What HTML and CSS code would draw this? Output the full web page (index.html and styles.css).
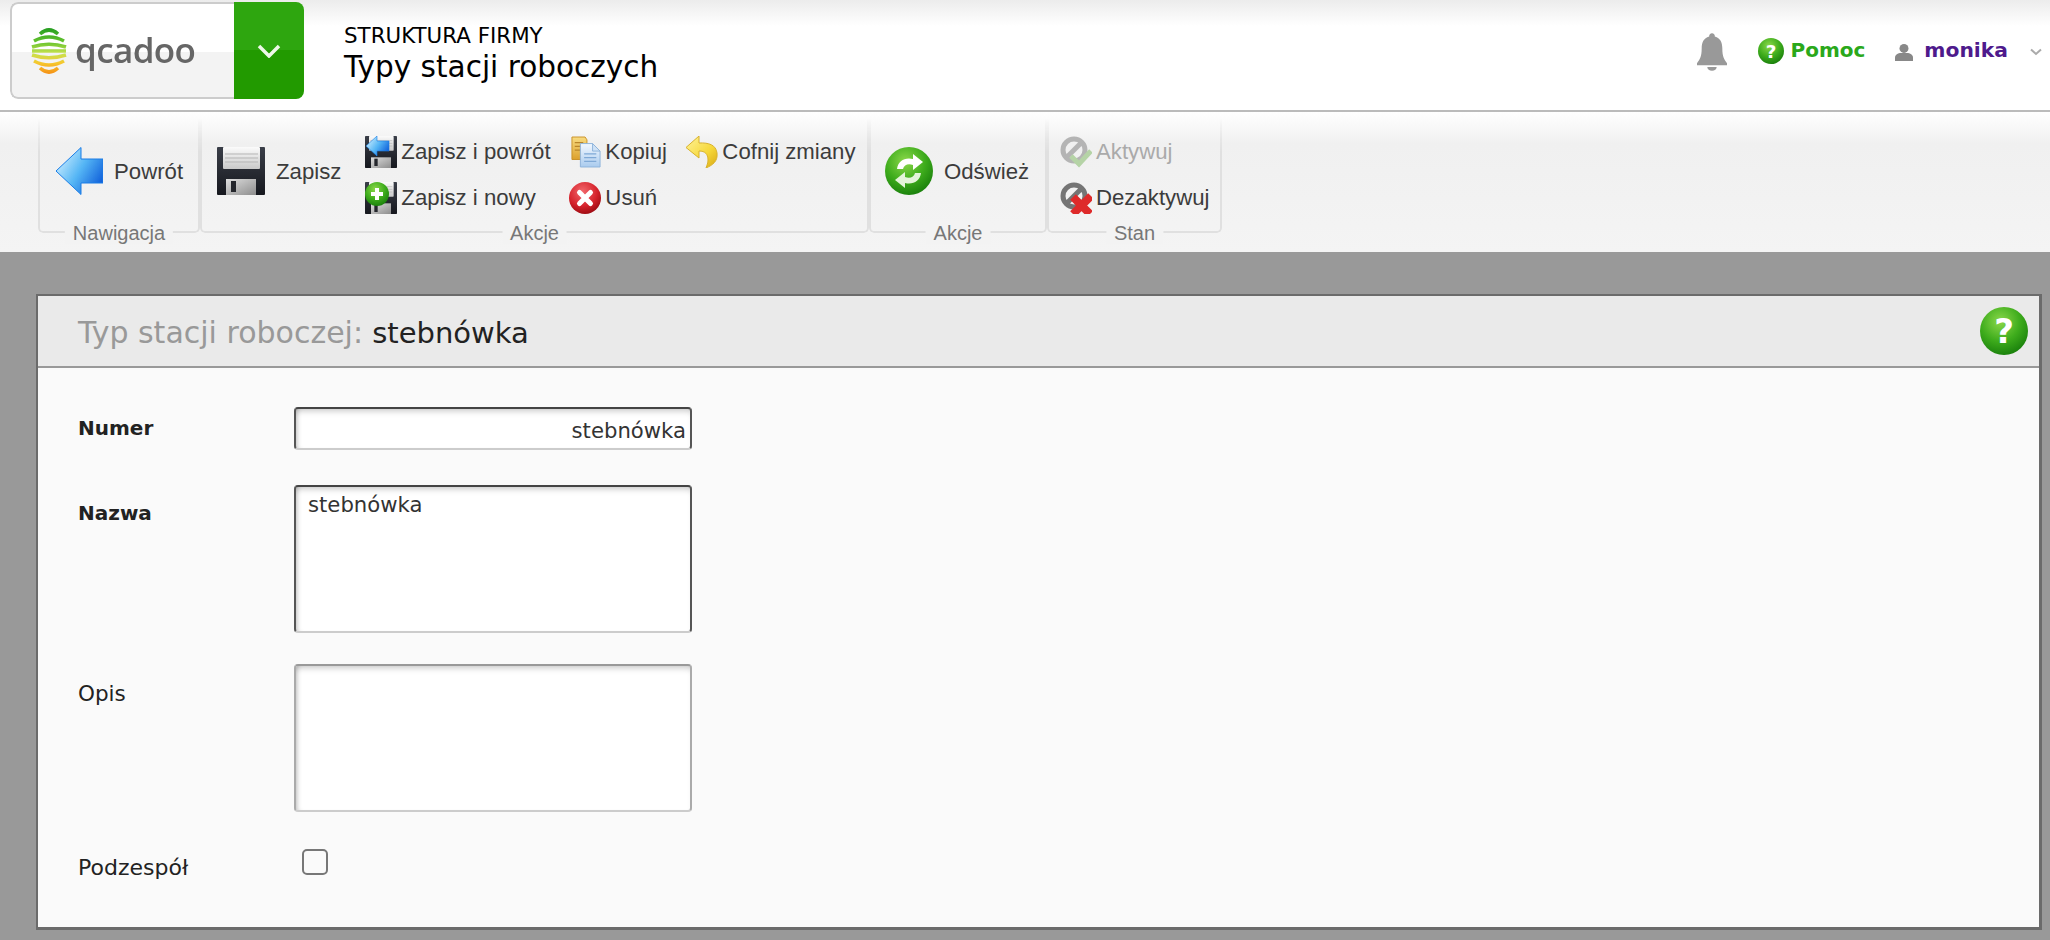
FILE: index.html
```html
<!DOCTYPE html>
<html lang="pl">
<head>
<meta charset="utf-8">
<title>Typy stacji roboczych</title>
<link rel="stylesheet" href="styles.css">
</head>
<body>
<svg class="defs" width="0" height="0" aria-hidden="true">
  <defs>
    <linearGradient id="gShaft" x1="0" y1=".2" x2="1" y2=".8"><stop offset="0" stop-color="#d4f1ff"/><stop offset=".5" stop-color="#55b6f5"/><stop offset="1" stop-color="#0a58d8"/></linearGradient>
    <linearGradient id="gLabel" x1="0" y1="0" x2="0" y2="1"><stop offset="0" stop-color="#fbfbfb"/><stop offset="1" stop-color="#c9c9c9"/></linearGradient>
    <linearGradient id="gShutter" x1="0" y1="0" x2="1" y2="1"><stop offset="0" stop-color="#dedede"/><stop offset="1" stop-color="#8d8d8d"/></linearGradient>
    <linearGradient id="gFloppy" x1="0" y1="0" x2="0" y2="1"><stop offset="0" stop-color="#3a3e48"/><stop offset="1" stop-color="#16181e"/></linearGradient>
    <radialGradient id="gGreen" cx=".42" cy=".3" r=".75"><stop offset="0" stop-color="#8bd84a"/><stop offset=".55" stop-color="#3eac1c"/><stop offset="1" stop-color="#167c0a"/></radialGradient>
    <radialGradient id="gRed" cx=".42" cy=".3" r=".75"><stop offset="0" stop-color="#f2686c"/><stop offset=".6" stop-color="#d6232c"/><stop offset="1" stop-color="#96080f"/></radialGradient>
    <linearGradient id="gYellow" x1="0" y1="0" x2="1" y2="1"><stop offset="0" stop-color="#fff39a"/><stop offset=".6" stop-color="#f6d83a"/><stop offset="1" stop-color="#d9a915"/></linearGradient>
    <linearGradient id="gDoc" x1="0" y1="0" x2="0" y2="1"><stop offset="0" stop-color="#f2f8ff"/><stop offset="1" stop-color="#a9cbee"/></linearGradient>
    <linearGradient id="gBack" x1="0" y1="0" x2="0" y2="1"><stop offset="0" stop-color="#f8dc82"/><stop offset="1" stop-color="#dca02c"/></linearGradient>
    <linearGradient id="gLogo" gradientUnits="userSpaceOnUse" x1="0" y1="0" x2="0" y2="48"><stop offset="0" stop-color="#1f9a1f"/><stop offset=".3" stop-color="#63c22c"/><stop offset=".55" stop-color="#c6e24e"/><stop offset=".75" stop-color="#f6c72e"/><stop offset="1" stop-color="#f58a12"/></linearGradient>
    <symbol id="floppy" viewBox="0 0 48 48">
      <path d="M1 0H47a1 1 0 0 1 1 1V47a1 1 0 0 1-1 1H1a1 1 0 0 1-1-1V1a1 1 0 0 1 1-1Z" fill="url(#gFloppy)"/>
      <rect x="6" y="0" width="37" height="22" rx="1" fill="url(#gLabel)"/>
      <path d="M8 7H41M8 11H41M8 15H41" stroke="#b5b5b5" stroke-width="1"/>
      <rect x="9" y="32" width="30" height="16" fill="url(#gShutter)"/>
      <rect x="14" y="34" width="5" height="11" fill="#24262c"/>
    </symbol>
    <symbol id="help" viewBox="0 0 48 48">
      <circle cx="24" cy="24" r="24" fill="url(#gGreen)"/>
      <text x="24" y="36" class="help-mark">?</text>
    </symbol>
  </defs>
</svg>

<header class="topbar">
  <div class="logo">
    <div class="logo-brand">
      <svg class="logo-mark" viewBox="0 0 36 48" aria-hidden="true">
        <g fill="none" stroke="url(#gLogo)" stroke-width="3.6">
          <path d="M9 7Q18 -1 27 7"/>
          <path d="M3 14Q18 6 33 14"/>
          <path d="M1 20Q18 14.500 35 20"/>
          <path d="M1 24H35"/>
          <path d="M1 28Q18 33.500 35 28"/>
          <path d="M3 34Q18 42 33 34"/>
          <path d="M9 41Q18 49 27 41"/>
        </g>
      </svg>
      <span class="logo-text">qcadoo</span>
    </div>
    <div class="logo-menu">
      <svg class="logo-chevron" viewBox="0 0 24 14" aria-hidden="true"><path d="M2 2L12 12L22 2" fill="none" stroke="#eef8e8" stroke-width="3.500"/></svg>
    </div>
  </div>
  <div class="page-titles">
    <div class="page-section">STRUKTURA FIRMY</div>
    <div class="page-name">Typy stacji roboczych</div>
  </div>
  <nav class="user-nav">
    <svg class="bell" viewBox="0 0 32 40" aria-hidden="true"><path d="M16 0a3 3 0 0 1 3 3.4C25 5 27 10 27 16c0 9 2 12 5 16v2H0v-2c3-4 5-7 5-16C5 10 7 5 13 3.4A3 3 0 0 1 16 0Z" fill="#999"/><path d="M11 36h10a5 4 0 0 1-10 0Z" fill="#999"/></svg>
    <svg class="nav-help"><use href="#help"/></svg>
    <span class="nav-pomoc">Pomoc</span>
    <svg class="nav-user" viewBox="0 0 20 20" aria-hidden="true"><circle cx="10" cy="6" r="5" fill="#888"/><path d="M0 20v-4c0-3 3-5 7-5h6c4 0 7 2 7 5v4Z" fill="#888"/></svg>
    <span class="nav-name">monika</span>
    <svg class="nav-caret" viewBox="0 0 12 8" aria-hidden="true"><path d="M1 1.5L6 6L11 1.5" fill="none" stroke="#aaa" stroke-width="2"/></svg>
  </nav>
</header>

<section class="ribbon">
  <div class="group group-nav">
    <div class="big-btn">
      <svg class="icon-big" viewBox="0 0 48 48" aria-hidden="true"><path d="M1 24L26 .5V12H48V36H26V47.5Z" fill="url(#gShaft)" stroke="#1a7de6" stroke-width="1"/></svg>
      <span>Powrót</span>
    </div>
    <div class="group-label">Nawigacja</div>
  </div>
  <div class="group group-actions">
    <div class="big-btn">
      <svg class="icon-big"><use href="#floppy"/></svg>
      <span>Zapisz</span>
    </div>
    <div class="small-grid">
      <div class="small-btn">
        <svg class="icon-small" viewBox="0 0 32 32" aria-hidden="true"><use href="#floppy" width="32" height="32"/><path d="M1 10L12 0V5H24V15H12V20Z" fill="url(#gShaft)" stroke="#1a7de6" stroke-width=".6"/></svg>
        <span>Zapisz i powrót</span>
      </div>
      <div class="small-btn">
        <svg class="icon-small icon-copy" viewBox="0 0 32 32" aria-hidden="true"><path d="M1 0H15L17 3V24H1Z" fill="url(#gBack)" stroke="#c98f24"/><path d="M4 6H13M4 10H13M4 14H13" stroke="#b9852a" stroke-width="1.3"/><path d="M10 7H23L31 15V32H10Z" fill="url(#gDoc)" stroke="#8db2da"/><path d="M23 7V15H31Z" fill="#cfe2f6" stroke="#8db2da"/><path d="M14 18H27M14 22H27M14 26H27" stroke="#7fa9d6" stroke-width="1.5"/></svg>
        <span>Kopiuj</span>
      </div>
      <div class="small-btn">
        <svg class="icon-small icon-undo" viewBox="0 0 32 32" aria-hidden="true"><path d="M13 0L0 11.5L13 22V15C19 15 22 18 22 24C22 27 21 29 20 32C27 29 32 25 31 17C30 9 23 6.500 13 7Z" fill="url(#gYellow)" stroke="#d8b12c" stroke-width="1"/></svg>
        <span>Cofnij zmiany</span>
      </div>
      <div class="small-btn">
        <svg class="icon-small" viewBox="0 0 32 32" aria-hidden="true"><use href="#floppy" width="32" height="32"/><circle cx="12" cy="12" r="12" fill="url(#gGreen)"/><path d="M10 6h4v4h4v4h-4v4h-4v-4H6v-4h4Z" fill="#fff"/></svg>
        <span>Zapisz i nowy</span>
      </div>
      <div class="small-btn">
        <svg class="icon-small" viewBox="0 0 32 32" aria-hidden="true"><circle cx="16" cy="16" r="16" fill="url(#gRed)"/><path d="M10.500 10.500L21.500 21.500M21.500 10.500L10.500 21.500" stroke="#fff" stroke-width="5" stroke-linecap="round"/></svg>
        <span>Usuń</span>
      </div>
    </div>
    <div class="group-label">Akcje</div>
  </div>
  <div class="group group-refresh">
    <div class="big-btn">
      <svg class="icon-big" viewBox="0 0 48 48" aria-hidden="true"><circle cx="24" cy="24" r="24" fill="url(#gGreen)"/><path d="M12 22C13 14 20 10 28 12V7L38 15L28 23V18C23 16 19 18 18 22Z" fill="#fff"/><path d="M36 26C35 34 28 38 20 36V41L10 33L20 25V30C25 32 29 30 30 26Z" fill="#e4f4da"/></svg>
      <span>Odśwież</span>
    </div>
    <div class="group-label">Akcje</div>
  </div>
  <div class="group group-state">
    <div class="state-col">
      <div class="small-btn is-disabled">
        <svg class="icon-small" viewBox="0 0 32 32" aria-hidden="true"><circle cx="14" cy="14" r="11" fill="none" stroke="#b4b4b4" stroke-width="5"/><path d="M7 21L21 7" stroke="#b4b4b4" stroke-width="5"/><path d="M11 20L19 28L31 15" fill="none" stroke="#b5d3a6" stroke-width="5"/></svg>
        <span>Aktywuj</span>
      </div>
      <div class="small-btn">
        <svg class="icon-small" viewBox="0 0 32 32" aria-hidden="true"><circle cx="14" cy="14" r="11" fill="none" stroke="#757575" stroke-width="5"/><path d="M7 21L21 7" stroke="#757575" stroke-width="5"/><path d="M13 15L30 32M31 14L13 32" stroke="#de2a2a" stroke-width="8"/></svg>
        <span>Dezaktywuj</span>
      </div>
    </div>
    <div class="group-label">Stan</div>
  </div>
</section>

<main class="panel">
  <div class="panel-head">
    <h1 class="panel-title"><span class="panel-kind">Typ stacji roboczej:</span> stebnówka</h1>
    <svg class="panel-help"><use href="#help"/></svg>
  </div>
  <form class="panel-body">
    <div class="row row-number">
      <label class="field-label is-required" for="f-number">Numer</label>
      <input class="field field-dark field-line" id="f-number" type="text" value="stebnówka" readonly>
    </div>
    <div class="row row-name">
      <label class="field-label is-required" for="f-name">Nazwa</label>
      <textarea class="field field-dark field-area" id="f-name" readonly>stebnówka</textarea>
    </div>
    <div class="row row-desc">
      <label class="field-label" for="f-desc">Opis</label>
      <textarea class="field field-area" id="f-desc" readonly></textarea>
    </div>
    <div class="row row-check">
      <label class="field-label" for="f-sub">Podzespół</label>
      <input class="check" id="f-sub" type="checkbox">
    </div>
  </form>
</main>
</body>
</html>
```

FILE: styles.css
```css
* { box-sizing: border-box; }

html, body {
  margin: 0;
  height: 940px;
  overflow: hidden;
}

body {
  background: #999;
  font-family: "DejaVu Sans", sans-serif;
  color: #222;
}

.defs { position: absolute; }

.help-mark {
  font: bold 34px "DejaVu Sans", sans-serif;
  fill: #fff;
  text-anchor: middle;
}

/* top bar */
.topbar {
  display: flex;
  align-items: flex-start;
  height: 112px;
  padding: 2px 0 0 10px;
  background: linear-gradient(#ececec 0, #fff 26px);
  border-bottom: 2px solid #bbb;
}

.logo {
  display: flex;
  width: 294px;
  height: 97px;
  border-radius: 8px;
  overflow: hidden;
}

.logo-brand {
  display: flex;
  align-items: flex-start;
  width: 224px;
  padding: 23px 0 0 19px;
  background: linear-gradient(#fff 0 48px, #f3f3f3 48px);
  border: 2px solid #ccc;
  border-right: 0;
  border-radius: 8px 0 0 8px;
}

.logo-mark {
  width: 36px;
  height: 48px;
  filter: blur(.5px);
}

.logo-text {
  margin: -2px 0 0 8px;
  font: 600 35px/50px "Open Sans", sans-serif;
  letter-spacing: -.6px;
  color: #666;
  filter: blur(.6px);
}

.logo-menu {
  display: flex;
  align-items: center;
  justify-content: center;
  width: 70px;
  background: linear-gradient(#2ea60f 0 48px, #229a00 48px);
}

.logo-chevron { width: 24px; height: 14px; }

.page-titles {
  margin: 21px 0 0 40px;
  color: #000;
}

.page-section { font-size: 21.400px; line-height: 26px; }

.page-name {
  font-size: 29.550px;
  line-height: 36px;
}

.user-nav {
  display: flex;
  align-items: center;
  margin: 27px 0 0 auto;
  padding-right: 8px;
  height: 46px;
  font-size: 20.300px;
  font-weight: bold;
}

.bell { width: 30px; height: 40px; margin-right: 31px; }
.nav-help { width: 26px; height: 26px; margin: 0 7px 2px 0; }
.nav-pomoc { color: #2aa81a; margin: 0 30px 4px 0; font-size: 20px; }
.nav-user { width: 18px; height: 20px; margin-right: 11px; }
.nav-name { color: #4e1a8c; margin: 0 22px 4px 0; }
.nav-caret { width: 12px; height: 8px; }

/* ribbon */
.ribbon {
  display: flex;
  align-items: flex-start;
  height: 140px;
  padding: 6px 0 0 38px;
  background: linear-gradient(#fff 0, #f0f0f0 32px, #f4f4f4 100%);
  font-family: "Liberation Sans", sans-serif;
  font-size: 22.200px;
  color: #3c3c3c;
  white-space: nowrap;
}

.group {
  position: relative;
  display: flex;
  align-items: flex-start;
  height: 115px;
  padding-top: 18px;
}

/* decorative frame: fades out towards the top of each group */
.group::before {
  content: "";
  position: absolute;
  inset: 0;
  border: 2px solid #e0e0e0;
  border-top: 0;
  border-radius: 0 0 5px 5px;
  -webkit-mask-image: linear-gradient(transparent 0, #000 34px);
  mask-image: linear-gradient(transparent 0, #000 34px);
}

.group-nav { width: 162px; padding-left: 17px; }
.group-actions { width: 669px; padding-left: 17px; }
.group-refresh { width: 178px; padding-left: 16px; padding-top: 29px; }
.group-state { width: 175px; padding-left: 13px; }
.group-nav .big-btn { margin-top: 11px; }
.group-actions .big-btn { margin-top: 11px; }

.group-label {
  position: absolute;
  left: 50%;
  bottom: -11px;
  transform: translateX(-50%);
  padding: 0 8px;
  background: #f3f3f3;
  font-size: 20px;
  line-height: 22px;
  color: #777;
}

.big-btn {
  display: flex;
  align-items: center;
  gap: 11px;
  height: 48px;
}

.big-btn span { padding-top: 2px; }

.icon-big {
  width: 48px;
  height: 48px;
  flex: none;
  filter: blur(.4px);
}

.small-grid {
  display: grid;
  grid-template-columns: 184px 97px auto;
  column-gap: 20px;
  row-gap: 14px;
  margin-left: 24px;
}

.state-col {
  display: flex;
  flex-direction: column;
  gap: 14px;
}

.small-btn {
  display: flex;
  align-items: center;
  gap: 4px;
  height: 32px;
}

.icon-small {
  width: 32px;
  height: 32px;
  flex: none;
  filter: blur(.4px);
}

.icon-copy { margin-left: 2px; width: 30px; margin-right: 0; }
.icon-undo { margin-right: 0; }
.is-disabled { color: #aaa; }

/* panel */
.panel {
  margin: 42px 8px 0 36px;
  height: 636px;
  background: #fafafa;
  border: 3px solid #6b6b6b;
  border-top-width: 2px;
  border-left-width: 2px;
}

.panel-head {
  display: flex;
  align-items: center;
  justify-content: space-between;
  height: 72px;
  padding: 0 11px 0 40px;
  background: #eaeaea;
  border-bottom: 2px solid #999;
}

.panel-title {
  margin: 2px 0 0;
  font-size: 29px;
  font-weight: normal;
  color: #222;
}

.panel-kind { color: #999; font-size: 30px; }
.panel-help { width: 48px; height: 48px; }

.panel-body {
  display: flex;
  flex-direction: column;
  padding: 39px 0 0 40px;
}

.row { display: flex; align-items: flex-start; }
.row-number { height: 78px; }
.row-name { height: 179px; }
.row-desc { height: 185px; }

.field-label {
  width: 216px;
  flex: none;
  font-size: 21.500px;
  line-height: 26px;
  color: #222;
}

.is-required { font-weight: bold; font-size: 20px; }

.row-number .field-label { padding-top: 8px; }
.row-name .field-label { padding-top: 15px; }
.row-desc .field-label { padding-top: 17px; }
.row-check .field-label { padding-top: 6px; font-size: 22px; }

.field {
  display: block;
  width: 398px;
  margin: 0;
  padding: 0;
  outline: 0;
  background: #fff;
  border: 2px solid #aaa;
  border-top-color: #999;
  border-bottom-color: #ccc;
  border-radius: 4px;
  box-shadow: inset 0 6px 6px -4px rgba(0, 0, 0, .22), inset 5px 0 5px -4px rgba(0, 0, 0, .25);
  font-family: "DejaVu Sans", sans-serif;
  font-size: 21.200px;
  color: #333;
  resize: none;
}

.field-dark {
  border-top-color: #444;
  border-left-color: #555;
  border-right-color: #555;
}

.field-line {
  height: 43px;
  padding: 4px 4px 0 0;
  text-align: right;
}

.field-area {
  height: 148px;
  padding: 5px 12px;
  line-height: 26px;
}

.check {
  appearance: none;
  width: 26px;
  height: 26px;
  margin: 0 0 0 8px;
  background: #fafafa;
  border: 2px solid #777;
  border-radius: 5px;
}
```
